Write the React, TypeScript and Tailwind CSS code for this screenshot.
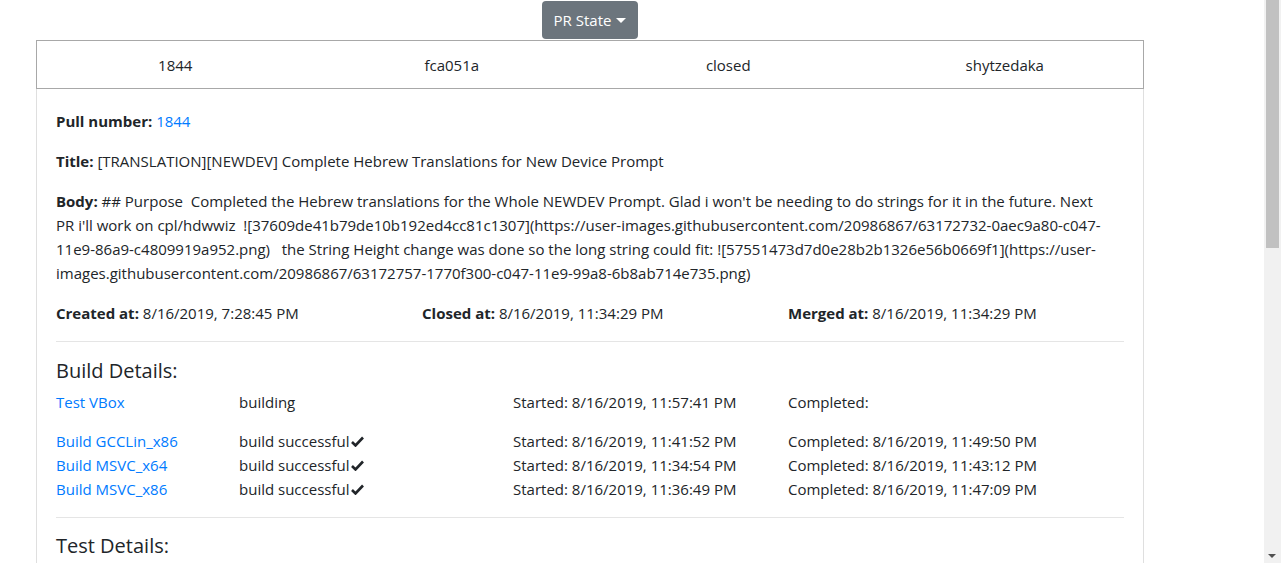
import React from "react";

const font = { fontFamily: '"Segoe UI", "Open Sans", "Noto Sans", sans-serif' };

function Check() {
  return (
    <svg width="13" height="11" viewBox="0 0 13 11" className="inline-block ml-[1px] -mt-[3px]">
      <path d="M1 6 L4.5 9.5 L12 1.5" stroke="#212529" strokeWidth="2.6" fill="none" />
    </svg>
  );
}

const builds = [
  { name: "Build GCCLin_x86", start: "8/16/2019, 11:41:52 PM", end: "8/16/2019, 11:49:50 PM" },
  { name: "Build MSVC_x64", start: "8/16/2019, 11:34:54 PM", end: "8/16/2019, 11:43:12 PM" },
  { name: "Build MSVC_x86", start: "8/16/2019, 11:36:49 PM", end: "8/16/2019, 11:47:09 PM" },
];

export default function App() {
  return (
    <div className="relative h-[563px] w-[1281px] overflow-hidden bg-white text-[15px] leading-[24px] text-[#212529]" style={font}>
      <div className="w-[1264px]">
        <div className="ml-[36px] w-[1108px]">
          <div className="flex justify-center pt-[1px] pb-[1px]">
            <div className="flex h-[38px] w-[96px] items-center justify-center gap-[5px] rounded-[4px] bg-[#6c757d] text-[15px] text-white">
              <span>PR State</span>
              <span className="mt-[1px] h-0 w-0 border-x-[5px] border-t-[5px] border-x-transparent border-t-white" />
            </div>
          </div>
          <div className="border-x border-b border-[#dfdfdf]">
            <div className="-mx-[1px] grid h-[49px] grid-cols-4 items-center border border-[#a8a8a8] text-center">
              <div>1844</div>
              <div>fca051a</div>
              <div>closed</div>
              <div>shytzedaka</div>
            </div>
            <div className="px-[19px] pt-[20px]">
              <p className="mb-[16px]">
                <b className="font-bold">Pull number:</b> <span className="text-[#007bff]">1844</span>
              </p>
              <p className="mb-[16px]">
                <b className="font-bold">Title:</b> [TRANSLATION][NEWDEV] Complete Hebrew Translations for New Device Prompt
              </p>
              <p className="mb-[16px] whitespace-pre">
                <b className="font-bold">Body:</b>
                {" ## Purpose  Completed the Hebrew translations for the Whole NEWDEV Prompt. Glad i won't be needing to do strings for it in the future. Next"}
                <br />
                {"PR i'll work on cpl/hdwwiz  ![37609de41b79de10b192ed4cc81c1307](https://user-images.githubusercontent.com/20986867/63172732-0aec9a80-c047-"}
                <br />
                {"11e9-86a9-c4809919a952.png)   the String Height change was done so the long string could fit: ![57551473d7d0e28b2b1326e56b0669f1](https://user-"}
                <br />
                {"images.githubusercontent.com/20986867/63172757-1770f300-c047-11e9-99a8-6b8ab714e735.png)"}
              </p>
              <div className="grid grid-cols-[366px_366px_1fr]">
                <div><b className="font-bold">Created at:</b> 8/16/2019, 7:28:45 PM</div>
                <div><b className="font-bold">Closed at:</b> 8/16/2019, 11:34:29 PM</div>
                <div><b className="font-bold">Merged at:</b> 8/16/2019, 11:34:29 PM</div>
              </div>
              <hr className="my-[16px] border-t border-[#e5e5e5]" />
              <h5 className="mb-[7px] pt-[1px] text-[20px] font-medium leading-[24px]">Build Details:</h5>
              <div className="grid grid-cols-[183px_274px_275px_1fr]">
                <div className="text-[#007bff]">Test VBox</div>
                <div>building</div>
                <div>Started: 8/16/2019, 11:57:41 PM</div>
                <div>Completed:</div>
              </div>
              <div className="h-[15px]" />
              {builds.map((b) => (
                <div key={b.name} className="grid grid-cols-[183px_274px_275px_1fr]">
                  <div className="text-[#007bff]">{b.name}</div>
                  <div>build successful<Check /></div>
                  <div>Started: {b.start}</div>
                  <div>Completed: {b.end}</div>
                </div>
              ))}
              <hr className="mb-[16px] mt-[16px] border-t border-[#e5e5e5]" />
              <h5 className="mb-[8px] text-[20px] font-medium leading-[24px]">Test Details:</h5>
              <div className="h-[200px]" />
            </div>
          </div>
        </div>
      </div>
      <div className="absolute right-0 top-0 h-[563px] w-[17px] bg-[#f1f1f1]">
        <div className="ml-[2px] h-[248px] w-[13px] bg-[#c1c1c1]" />
        <div className="absolute bottom-[5px] left-[4px] h-0 w-0 border-x-[4px] border-t-[4px] border-x-transparent border-t-[#505050]" />
      </div>
    </div>
  );
}
